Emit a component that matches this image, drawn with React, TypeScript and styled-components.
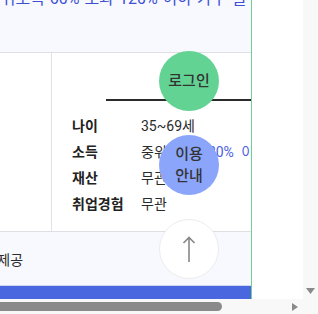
import React from "react";
import styled, { createGlobalStyle } from "styled-components";

const GlobalStyle = createGlobalStyle`
  html, body {
    margin: 0;
    padding: 0;
    overflow: hidden;
    background: #fff;
  }
  body {
    font-family: Roboto, "Noto Sans CJK KR", "Noto Sans", sans-serif;
    color: #333;
  }
`;

const rows = [
  { label: "나이", value: "35~69세" },
  { label: "소득", value: "중위소득", highlight: "120% 이하" },
  { label: "재산", value: "무관" },
  { label: "취업경험", value: "무관" },
];

export default function App() {
  return (
    <>
      <GlobalStyle />
      <Viewport>
        <Stage>
          <Panel>
            <Notice>
              <NoticeText>중위소득 60% 초과 120% 이하 가구 필수</NoticeText>
            </Notice>
            <Table>
              <SideCell />
              <MainCell>
                <TabLine />
                <InfoList>
                  {rows.map((r) => (
                    <InfoRow key={r.label}>
                      <Label>{r.label}</Label>
                      <Value>
                        {r.value}
                        {r.highlight && <Accent> {r.highlight}</Accent>}
                      </Value>
                    </InfoRow>
                  ))}
                </InfoList>
              </MainCell>
            </Table>
            <Footer>
              <FooterText>맞춤형 정보 제공</FooterText>
            </Footer>
            <BlueBar />
          </Panel>
        </Stage>
        <VScroll>
          <svg width="9" height="6" viewBox="0 0 9 6">
            <path d="M0 0 H9 L4.5 6 Z" fill="#8a8a8a" />
          </svg>
        </VScroll>
        <HScroll>
          <Thumb />
          <svg width="6" height="8" viewBox="0 0 6 8">
            <path d="M0 0 L6 4 L0 8 Z" fill="#8a8a8a" />
          </svg>
        </HScroll>
        <Corner />
        <FloatMenu>
          <RoundButton $bg="#63d394">로그인</RoundButton>
          <RoundButton $bg="#8ba5fb">
            이용
            <br />
            안내
          </RoundButton>
          <RoundButton $bg="#fff" $border>
            <svg width="14" height="27" viewBox="0 0 14 27">
              <path
                d="M7 1.5 V26 M1.5 7 L7 1.5 L12.5 7"
                fill="none"
                stroke="#888"
                strokeWidth="1.6"
              />
            </svg>
          </RoundButton>
        </FloatMenu>
      </Viewport>
    </>
  );
}

const Viewport = styled.div`
  position: relative;
  width: 318px;
  height: 314px;
  display: grid;
  grid-template-columns: 303px 15px;
  grid-template-rows: 299px 15px;
  overflow: hidden;
`;

const Stage = styled.div`
  display: flex;
  background: #fff;
`;

const Panel = styled.div`
  width: 251px;
  border-right: 1px solid #6fcf97;
  display: flex;
  flex-direction: column;
  overflow: hidden;
`;

const Notice = styled.div`
  height: 52px;
  background: #f8f9ff;
  border-bottom: 1px solid #dedfe3;
`;

const NoticeText = styled.div`
  margin: -12px 0 0 -14px;
  font-size: 16px;
  line-height: 22px;
  word-spacing: 1px;
  color: #3d50d2;
  white-space: nowrap;
`;

const Table = styled.div`
  height: 178px;
  display: flex;
  border-bottom: 1px solid #dedfe3;
`;

const SideCell = styled.div`
  width: 51px;
  flex-shrink: 0;
  border-right: 1px solid #e2e2e6;
`;

const MainCell = styled.div`
  flex: 1;
  min-width: 0;
  padding-left: 20px;
`;

const TabLine = styled.div`
  height: 46px;
  margin-left: 34px;
  border-bottom: 2px solid #2b2b2b;
`;

const InfoList = styled.div`
  padding-top: 11px;
`;

const InfoRow = styled.div`
  display: grid;
  grid-template-columns: 69px 1fr;
  height: 26px;
  align-items: center;
  font-size: 14px;
  white-space: nowrap;
`;

const Label = styled.span`
  font-weight: 700;
  color: #222;
`;

const Value = styled.span`
  color: #2b2b2b;
  word-spacing: 4px;
`;

const Accent = styled.span`
  color: #4a5ee0;
`;

const Footer = styled.div`
  height: 53px;
  display: flex;
  align-items: center;
  background: #f8f9ff;
  border-bottom: 1px solid #cfd7f3;
`;

const FooterText = styled.span`
  margin-left: -74px;
  font-size: 14px;
  color: #2b2b2b;
  white-space: nowrap;
`;

const BlueBar = styled.div`
  height: 13px;
  background: #4b67e0;
`;

const VScroll = styled.div`
  background: #f8f8f8;
  display: flex;
  flex-direction: column;
  justify-content: flex-end;
  align-items: center;
  padding-bottom: 5px;
`;

const HScroll = styled.div`
  background: #f8f8f8;
  display: flex;
  align-items: center;
  padding-right: 5px;
  justify-content: space-between;
`;

const Thumb = styled.div`
  width: 222px;
  height: 9px;
  background: #8a8a8a;
  border-radius: 0 5px 5px 0;
`;

const Corner = styled.div`
  background: #f8f8f8;
`;

const FloatMenu = styled.div`
  position: absolute;
  left: 159px;
  top: 51px;
  display: flex;
  flex-direction: column;
  gap: 24px;
`;

const RoundButton = styled.div<{ $bg: string; $border?: boolean }>`
  width: 60px;
  height: 60px;
  box-sizing: border-box;
  border-radius: 50%;
  background: ${(p) => p.$bg};
  border: ${(p) => (p.$border ? "1px solid #ececec" : "none")};
  display: flex;
  align-items: center;
  justify-content: center;
  text-align: center;
  font-size: 15px;
  font-weight: 500;
  line-height: 22px;
  color: #333;
`;
